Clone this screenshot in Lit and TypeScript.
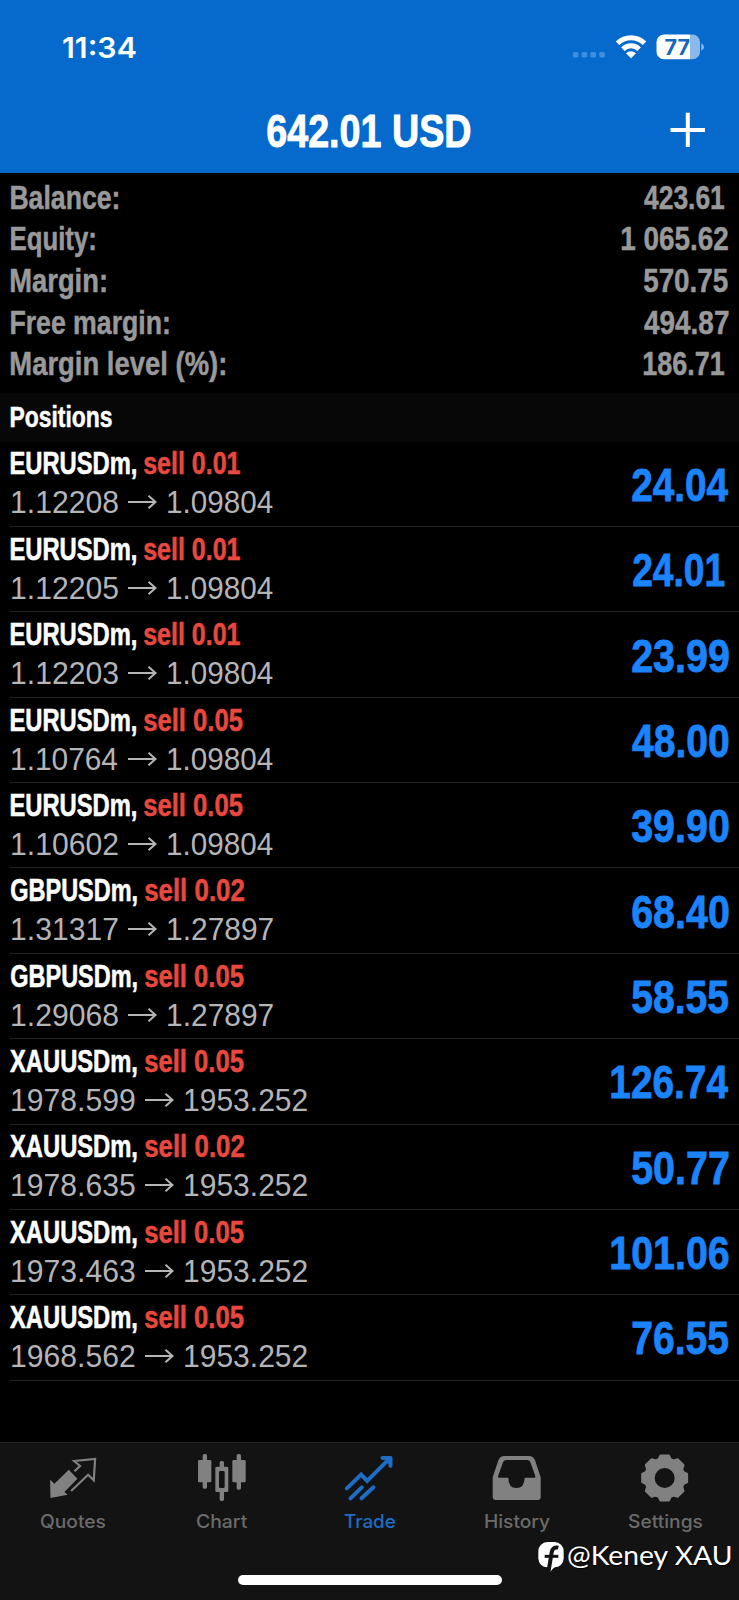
import { LitElement, html, css, svg } from "lit";
import { customElement, property } from "lit/decorators.js";
import { styleMap } from "lit/directives/style-map.js";

const ctx = document.createElement("canvas").getContext("2d")!;

/** Text condensed or stretched horizontally so that its ink fills a given width. */
@customElement("fit-text")
class FitText extends LitElement {
  @property() text = "";
  @property() face = "bold 30px 'Liberation Sans'";
  @property({ type: Number }) w = 0;

  static styles = css`
    :host { display: block; white-space: pre; flex: none; }
    .box { display: block; }
    .ink { display: inline-block; transform-origin: 0 50%; }
  `;

  render() {
    ctx.font = this.face;
    const m = ctx.measureText(this.text);
    const ink = m.actualBoundingBoxLeft + m.actualBoundingBoxRight;
    const s = this.w / ink;
    return html`<span class="box" style=${styleMap({ width: `${this.w}px` })}
      ><span class="ink" style=${styleMap({ transform: `scaleX(${s}) translateX(${m.actualBoundingBoxLeft}px)` })}>${this.text}</span></span>`;
  }
}

const fit = (cls: string, text: string, face: string, w: number) =>
  html`<fit-text class=${cls} .text=${text} .face=${face} .w=${w}></fit-text>`;

const LABEL = "bold 33px 'Liberation Sans'";
const SYMBOL = "bold 30.6px 'Liberation Sans'";
const PRICE = "31px 'Liberation Sans'";
const AMOUNT = "bold 46px 'Liberation Sans'";
const TAB = "500 18.4px Inter";

const summary: [string, number, string, number][] = [
  ["Balance:", 107, "423.61", 80.5],
  ["Equity:", 83.5, "1 065.62", 106.5],
  ["Margin:", 94.5, "570.75", 84],
  ["Free margin:", 157.5, "494.87", 84.3],
  ["Margin level (%):", 213.8, "186.71", 80.5],
];

const positions: [string, string, string, string, string][] = [
  ["EURUSDm,", "0.01", "1.12208", "1.09804", "24.04"],
  ["EURUSDm,", "0.01", "1.12205", "1.09804", "24.01"],
  ["EURUSDm,", "0.01", "1.12203", "1.09804", "23.99"],
  ["EURUSDm,", "0.05", "1.10764", "1.09804", "48.00"],
  ["EURUSDm,", "0.05", "1.10602", "1.09804", "39.90"],
  ["GBPUSDm,", "0.02", "1.31317", "1.27897", "68.40"],
  ["GBPUSDm,", "0.05", "1.29068", "1.27897", "58.55"],
  ["XAUUSDm,", "0.05", "1978.599", "1953.252", "126.74"],
  ["XAUUSDm,", "0.02", "1978.635", "1953.252", "50.77"],
  ["XAUUSDm,", "0.05", "1973.463", "1953.252", "101.06"],
  ["XAUUSDm,", "0.05", "1968.562", "1953.252", "76.55"],
];

const gear = (() => {
  const pts: string[] = [];
  for (let i = 0; i < 8; i++) {
    for (const [d, r] of [[-18, 59], [-10.5, 68.5], [10.5, 68.5], [18, 59]]) {
      const a = ((i * 45 + d) * Math.PI) / 180;
      pts.push(`${(557 + r * Math.sin(a)).toFixed(1)} ${(144 - r * Math.cos(a)).toFixed(1)}`);
    }
  }
  return `M${pts.join("L")}Z M590 144a33 33 0 1 0-66 0a33 33 0 1 0 66 0Z`;
})();

const tabs = [
  { name: "Quotes", w: 65, box: "131.7 60 180 168", icon: svg`
    <path fill="currentColor" d="M150 149L163 161L206 119L232 146L193 186L203 194L151 204Z"/>
    <path fill="none" stroke="currentColor" stroke-width="6.5" d="M223 124L240 108L222 93L285 87L281 151L264 134L213 183"/>` },
  { name: "Chart", w: 50, box: "575 60 180 168", icon: svg`
    <g fill="currentColor"><rect x="593" y="90" width="40" height="67" rx="4"/><rect x="607" y="72" width="13" height="104" rx="5"/>
    <rect x="696" y="90" width="40" height="67" rx="4"/><rect x="709" y="72" width="13" height="107" rx="5"/>
    <rect x="658" y="93" width="13" height="25" rx="5"/><rect x="658" y="178" width="13" height="35" rx="5"/>
    <path fill-rule="evenodd" d="M649 110H680Q684 110 684 114V182Q684 186 680 186H649Q645 186 645 182V114Q645 110 649 110ZM659 123Q656 123 656 127V170Q656 174 660 174H669Q673 174 673 170V127Q673 123 669 123Z"/></g>` },
  { name: "Trade", w: 51, box: "298.5 60 180 168", icon: svg`
    <g fill="none" stroke="currentColor" stroke-width="12" stroke-linecap="round" stroke-linejoin="round">
    <path stroke-linejoin="miter" d="M322 175L365 134L383 153L447 89"/><path d="M429 84H453V107"/><path d="M333 205L367 172M366 205L402 172"/></g>
    <path fill="currentColor" d="M430 84H453V108Z"/>` },
  { name: "History", w: 65.5, box: "24.9 60 180 168", icon: svg`
    <path fill="currentColor" fill-rule="evenodd" d="M42 142L59 91Q64 78 78 78H150Q164 78 169 91L186 142V201Q186 210 177 210H51Q42 210 42 201ZM58 139L73 97Q76 90 83 90H145Q152 90 155 97L170 139Q171 143 166 143H138Q137 174 113 174Q89 174 89 143H62Q57 143 58 139Z"/>` },
  { name: "Settings", w: 75, box: "468 60 180 168", icon: svg`
    <path fill="currentColor" stroke="currentColor" stroke-width="6" stroke-linejoin="round" fill-rule="evenodd" d=${gear}/>` },
];

@customElement("app-root")
class AppRoot extends LitElement {
  static styles = css`
    :host { display: flex; flex-direction: column; width: 739px; height: 1600px; background: #000; overflow: hidden; font-family: "Liberation Sans", Arial, sans-serif; position: relative; }
    svg { display: block; }
    header { height: 172.6px; background: #056acc; color: #fff; flex: none; }
    .status { display: flex; align-items: flex-start; height: 86px; }
    .time { margin: 27.5px 0 0 63px; font: 600 29px/40px Inter, sans-serif; }
    .sys { margin: 30px 31px 0 auto; }
    .sys text { font: 700 21px Inter, sans-serif; }
    .nav { display: flex; align-items: center; height: 86px; }
    .title { margin-left: 267px; font: bold 46.5px/60px "Liberation Sans", sans-serif; margin-top: 3px; -webkit-text-stroke: .9px; }
    .plus { margin: 2px 32px 0 auto; }
    .summary { height: 216.2px; padding-top: 4px; flex: none; color: #999; }
    .line { display: flex; justify-content: space-between; height: 41.7px; padding: 0 11px 0 11px; }
    .label { font: bold 33px/42px "Liberation Sans", sans-serif; -webkit-text-stroke: .5px; }
    .one { margin-right: 3.4px; }
    .section { height: 48.9px; flex: none; background: #070707; color: #fff; padding-left: 11px; }
    .heading { font: bold 30px/48px "Liberation Sans", sans-serif; -webkit-text-stroke: .5px; }
    .row { box-sizing: border-box; height: 85.37px; display: flex; align-items: center; justify-content: space-between; margin-left: 10px; border-bottom: 1px solid #242426; padding-right: 11px; flex: none; }
    .info { padding-bottom: .8px; }
    .top, .bottom { display: flex; height: 40px; }
    .symbol { font: bold 30.6px/40px "Liberation Sans", sans-serif; color: #fff; margin: 0 8px 0 .8px; -webkit-text-stroke: .6px; }
    .x { margin-left: 0; }
    .side { font: bold 30.6px/40px "Liberation Sans", sans-serif; color: #e8483d; -webkit-text-stroke: .5px; }
    .bottom { color: #b5b5b7; padding-left: 2px; align-items: center; }
    .price { font: 31px/40px "Liberation Sans", sans-serif; }
    .arrow { margin: 0 11.5px 2px 10px; }
    .amount { font: bold 46px/60px "Liberation Sans", sans-serif; color: #1b84fc; padding-top: 2px; -webkit-text-stroke: .8px; }
    footer { box-sizing: border-box; height: 158px; margin-top: auto; flex: none; background: #131313; border-top: 1px solid #242424; display: flex; flex-direction: column; align-items: center; }
    .tabs { display: flex; width: 100%; padding-top: 7px; height: 125px; }
    .tab { flex: 1; display: flex; flex-direction: column; align-items: center; color: #818181; }
    .name { font: 500 18.4px/28px Inter, sans-serif; color: #6b6b6b; margin-top: 1px; }
    .on, .on .name { color: #1f6cc4; }
    .home { width: 264px; height: 10px; border-radius: 5px; background: #fff; }
    .mark { position: absolute; right: 8px; top: 1536.5px; display: flex; color: #fff; }
    .handle { font: 27.5px/36px Lato, sans-serif; margin-left: 3px; text-shadow: 1px 1px 1px #000; }
  `;

  render() {
    return html`
      <header>
        <div class="status">
          ${fit("time", "11:34", "600 29px Inter", 72.5)}
          <svg class="sys" width="136" height="34" viewBox="572 30 136 34">
            <g fill="#3f8ee0"><rect x="572.8" y="52" width="5.6" height="5.6" rx="1.6"/><rect x="581.6" y="52" width="5.6" height="5.6" rx="1.6"/><rect x="590.4" y="52" width="5.6" height="5.6" rx="1.6"/><rect x="599.3" y="52" width="5.6" height="5.6" rx="1.6"/></g>
            <g fill="none" stroke="#fff" stroke-width="5"><path d="M617.5 43.2A19.4 19.4 0 0 1 644.5 43.2"/><path d="M622.9 49.2A11.4 11.4 0 0 1 639.1 49.2"/></g>
            <path fill="#fff" d="M631 58.2L626 53.2Q631 49.2 636 53.2Z"/>
            <path fill="#8db9ea" d="M690 34.6H692.5A7.5 7.5 0 0 1 700 42.1V51.7A7.5 7.5 0 0 1 692.5 59.2H690ZM701.3 43.3Q704 44.6 704 47T701.3 50.8Z"/>
            <path fill="#fff" d="M690 34.6H664A7.5 7.5 0 0 0 656.5 42.1V51.7A7.5 7.5 0 0 0 664 59.2H690Z"/>
            <text x="664.6" y="54.6" textLength="25.5" lengthAdjust="spacingAndGlyphs" fill="#1767be">77</text>
          </svg>
        </div>
        <div class="nav">
          ${fit("title", "642.01 USD", "bold 46.5px 'Liberation Sans'", 203.3)}
          <svg class="plus" width="38" height="38" viewBox="0 0 38 38"><path d="M1.5 19H36M18.8 1.7V36" stroke="#fff" stroke-width="4"/></svg>
        </div>
      </header>
      <section class="summary">
        ${summary.map(([l, lw, v, vw]) => html`<div class="line">
          ${fit("label", l, LABEL, lw)}
          ${fit(v.endsWith("1") ? "label one" : "label", v, LABEL, vw)}
        </div>`)}
      </section>
      <div class="section">${fit("heading", "Positions", "bold 30px 'Liberation Sans'", 101)}</div>
      ${positions.map(([sym, lots, open, now, sum]) => {
        const long = open.length > 7;
        const one = sum.endsWith("1");
        return html`<div class="row">
          <div class="info">
            <div class="top">
              ${fit(sym[0] === "X" ? "symbol x" : "symbol", sym, SYMBOL, sym[0] === "E" ? 125.3 : sym[0] === "X" ? 126.8 : 126)}
              ${fit("side", `sell ${lots}`, SYMBOL, lots.endsWith("1") ? 96.5 : 99)}
            </div>
            <div class="bottom">
              ${fit("price", open, PRICE, long ? 122.5 : 105.7)}
              <svg class="arrow" width="29" height="16" viewBox="0 0 29 16"><path d="M0 8H27M20.5 1.8L27.5 8L20.5 14.2" fill="none" stroke="currentColor" stroke-width="2"/></svg>
              ${fit("price", now, PRICE, long ? 122 : 105)}
            </div>
          </div>
          ${fit(one ? "amount one" : "amount", sum, AMOUNT, sum.length > 5 ? 117.3 : one ? 91.7 : 96.5)}
        </div>`;
      })}
      <footer>
        <div class="tabs">
          ${tabs.map((t) => html`<div class=${t.name === "Trade" ? "tab on" : "tab"}>
            <svg width="60" height="56" viewBox=${t.box}>${t.icon}</svg>
            ${fit("name", t.name, TAB, t.w)}
          </div>`)}
        </div>
        <div class="home"></div>
      </footer>
      <div class="mark">
        <svg width="27" height="36" viewBox="177 321 81 108">
          <rect x="178" y="336" width="76" height="76" rx="27" fill="#fff"/>
          <path fill="#fff" d="M213 408H232Q222 415 214 425Z"/>
          <path fill="none" stroke="#131313" stroke-width="12" d="M238 353Q222 349 218 367L209 422"/>
          <path fill="none" stroke="#131313" stroke-width="9" d="M197 379H238"/>
        </svg>
        ${fit("handle", "@Keney XAU", "27.5px Lato", 163)}
      </div>
    `;
  }
}
